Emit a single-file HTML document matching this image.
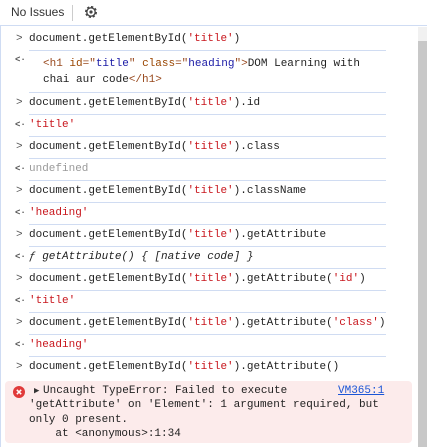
<!DOCTYPE html><html><head><style>
body{margin:0;width:427px;height:447px;background:#fff;overflow:hidden;position:relative;font-family:"Liberation Mono",monospace;font-size:11px;color:#1f1f1f}
.hdr{position:absolute;left:0;top:0;width:427px;height:25px;border-bottom:1px solid #cfdcf3;font-family:"Liberation Sans",sans-serif;font-size:12px;color:#333}
.sb{position:absolute;left:418px;top:27px;width:9px;height:420px;background:#c8c8c8}
.sbt{position:absolute;left:418px;top:27px;width:9px;height:14px;background:#f1f1f1}
.lb{position:absolute;left:0;top:26px;width:1px;height:421px;background:#cfdcf3}
.r{position:absolute;left:29px;width:357px;height:21px;border-bottom:1px solid #d0dcf2;line-height:21px;white-space:pre}
.p{position:absolute;left:-13px;color:#555;font-size:11px}
.q{position:absolute;left:-14px;color:#555;font-size:9px;font-weight:bold}
.s{color:#c8161d}.t{color:#994a1f}.a{color:#994500}.v{color:#1a1aa6}.u{color:#9a9a9a}.i{font-style:italic;color:#1f1f1f}
.err{position:absolute;left:5px;top:381px;width:407px;height:62px;background:#fcebeb;border-radius:4px;color:#222}
.el{position:absolute;white-space:pre;line-height:14px}
</style></head><body>
<div class="hdr"><span style="position:absolute;left:11px;top:5px">No Issues</span><span style="position:absolute;left:72px;top:5px;width:1px;height:16px;background:#ccc"></span>
<svg style="position:absolute;left:83px;top:4px" width="16" height="16" viewBox="0 0 16 16"><circle cx="8" cy="8" r="5" fill="none" stroke="#444" stroke-width="2" stroke-dasharray="2.2 1.7"/><circle cx="8" cy="8" r="4.2" fill="none" stroke="#444" stroke-width="1.3"/><circle cx="8" cy="8" r="1.6" fill="#444"/></svg></div>
<div class="lb"></div><div class="sb"></div><div class="sbt"></div>
<div class="r" style="top:29px"><span class="p">&gt;</span>document.getElementById(<span class="s">'title'</span>)</div>
<div class="r" style="top:51px;height:41px;line-height:16px"><span class="q" style="top:1px">&lt;·</span><div style="padding:5px 0 0 14px;white-space:pre"><span class="t">&lt;h1</span> <span class="a">id</span><span class="t">="</span><span class="v">title</span><span class="t">"</span> <span class="a">class</span><span class="t">="</span><span class="v">heading</span><span class="t">"&gt;</span>DOM Learning with
chai aur code<span class="t">&lt;/h1&gt;</span></div></div>
<div class="r" style="top:93px"><span class="p">&gt;</span>document.getElementById(<span class="s">'title'</span>).id</div>
<div class="r" style="top:115px"><span class="q">&lt;·</span><span class="s">'title'</span></div>
<div class="r" style="top:137px"><span class="p">&gt;</span>document.getElementById(<span class="s">'title'</span>).class</div>
<div class="r" style="top:159px"><span class="q">&lt;·</span><span class="u">undefined</span></div>
<div class="r" style="top:181px"><span class="p">&gt;</span>document.getElementById(<span class="s">'title'</span>).className</div>
<div class="r" style="top:203px"><span class="q">&lt;·</span><span class="s">'heading'</span></div>
<div class="r" style="top:225px"><span class="p">&gt;</span>document.getElementById(<span class="s">'title'</span>).getAttribute</div>
<div class="r" style="top:247px"><span class="q">&lt;·</span><span class="i">ƒ getAttribute() { [native code] }</span></div>
<div class="r" style="top:269px"><span class="p">&gt;</span>document.getElementById(<span class="s">'title'</span>).getAttribute(<span class="s">'id'</span>)</div>
<div class="r" style="top:291px"><span class="q">&lt;·</span><span class="s">'title'</span></div>
<div class="r" style="top:313px"><span class="p">&gt;</span>document.getElementById(<span class="s">'title'</span>).getAttribute(<span class="s">'class'</span>)</div>
<div class="r" style="top:335px"><span class="q">&lt;·</span><span class="s">'heading'</span></div>
<div class="r" style="top:357px;border-bottom:none"><span class="p">&gt;</span>document.getElementById(<span class="s">'title'</span>).getAttribute()</div>
<div class="err">
<svg style="position:absolute;left:8px;top:5px" width="12" height="12" viewBox="0 0 12 12"><circle cx="6" cy="6" r="6" fill="#e03a3a"/><path d="M3.8 3.8L8.2 8.2M8.2 3.8L3.8 8.2" stroke="#fff" stroke-width="1.5"/></svg>
<span class="el" style="left:29px;top:3px;font-size:9px;color:#333">▶</span>
<span class="el" style="left:38px;top:3px">Uncaught TypeError: Failed to execute</span>
<span class="el" style="left:24px;top:17px">'getAttribute' on 'Element': 1 argument required, but</span>
<span class="el" style="left:24px;top:32px">only 0 present.</span>
<span class="el" style="left:24px;top:46px">    at &lt;anonymous&gt;:1:34</span>
<span class="el" style="left:333px;top:3px;color:#1a55d6;text-decoration:underline">VM365:1</span>
</div>
</body></html>
